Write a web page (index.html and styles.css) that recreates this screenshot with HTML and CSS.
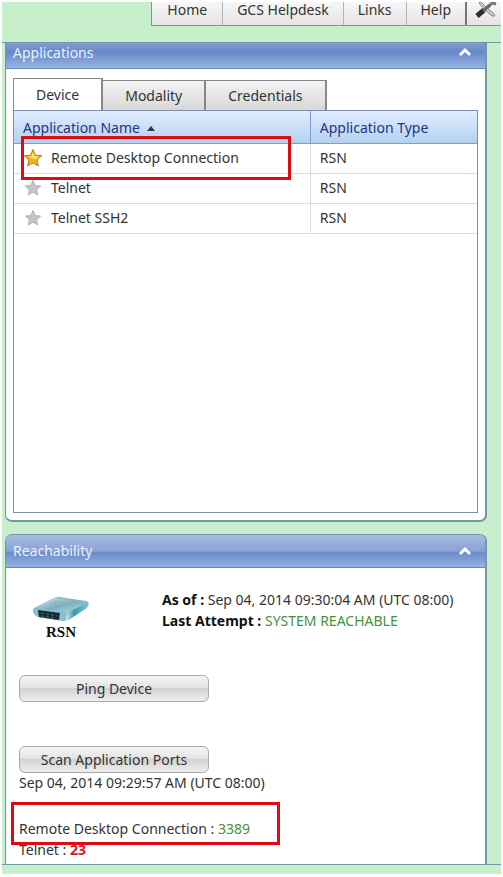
FILE: index.html
```html
<!DOCTYPE html>
<html lang="en">
<head>
	<meta charset="UTF-8">
	<title>Applications</title>
	<link rel="stylesheet" href="styles.css">
</head>
<body>
	<div class="page">
		<div class="topbar">
			<ul class="menu">
				<li><a href="#">Home</a></li>
				<li><a href="#">GCS Helpdesk</a></li>
				<li><a href="#">Links</a></li>
				<li><a href="#">Help</a></li>
				<li class="tools">
					<button type="button" class="tool-btn" aria-label="Tools">
						<svg width="22" height="16" viewBox="0 0 22 16">
							<path d="M6 0L10 4L18 11L20 14L17 14L8 6L4 1Z" fill="#ccc" stroke="#888" />
							<path d="M12 6L17 1L21 2" fill="none" stroke="#777" stroke-width="3" />
							<path d="M2 14L9 8" fill="none" stroke="#2c2c2c" stroke-width="5" />
							<path d="M8 9L15 3" fill="none" stroke="#666" stroke-width="3" />
						</svg>
					</button>
				</li>
			</ul>
		</div>

		<div class="content">
			<!-- applications -->
			<div class="panel panel-apps">
				<div class="panel-head">
					<h2>Applications</h2>
					<button type="button" class="toggle" aria-label="Collapse">
						<svg width="14" height="10" viewBox="0 0 14 10"><path d="M2 8L7 3L12 8" /></svg>
					</button>
				</div>
				<div class="panel-body">
					<div class="tabs">
						<button type="button" class="tab active">Device</button>
						<button type="button" class="tab">Modality</button>
						<button type="button" class="tab">Credentials</button>
					</div>
					<div class="grid">
						<table>
							<thead>
								<tr>
									<th class="col-name">Application Name <svg class="sort" width="8" height="5" viewBox="0 0 8 5"><path d="M0 5L4 0L8 5Z" /></svg></th>
									<th>Application Type</th>
								</tr>
							</thead>
							<tbody>
								<tr>
									<td class="marked">
										<svg class="star on" width="20" height="20" viewBox="0 0 20 20"><path d="M10 1.500L12.500 7.200L18.700 7.800L14 12L15.400 18L10 14.900L4.600 18L6 12L1.300 7.800L7.500 7.200Z" /><path class="shine" d="M10 4L11.700 8.300L16 8.800L12.500 11.200L4.500 9L8.300 8.300Z" /></svg>
										Remote Desktop Connection
										<span class="mark mark-row"></span>
									</td>
									<td>RSN</td>
								</tr>
								<tr>
									<td>
										<svg class="star" width="20" height="20" viewBox="0 0 20 20"><path d="M10 2.500L12.200 7.600L17.700 8.100L13.600 11.800L14.800 17L10 14.200L5.200 17L6.400 11.800L2.300 8.100L7.800 7.600Z" /></svg>
										Telnet
									</td>
									<td>RSN</td>
								</tr>
								<tr>
									<td>
										<svg class="star" width="20" height="20" viewBox="0 0 20 20"><path d="M10 2.500L12.200 7.600L17.700 8.100L13.600 11.800L14.800 17L10 14.200L5.200 17L6.400 11.800L2.300 8.100L7.800 7.600Z" /></svg>
										Telnet SSH2
									</td>
									<td>RSN</td>
								</tr>
							</tbody>
						</table>
					</div>
				</div>
			</div>

			<!-- reachability -->
			<div class="panel panel-reach">
				<div class="panel-head">
					<h2>Reachability</h2>
					<button type="button" class="toggle" aria-label="Collapse">
						<svg width="14" height="10" viewBox="0 0 14 10"><path d="M2 8L7 3L12 8" /></svg>
					</button>
				</div>
				<div class="panel-body">
					<div class="status">
						<div class="device">
							<svg width="58" height="28" viewBox="0 0 58 28">
								<defs>
									<linearGradient id="top" x1="0" y1="0" x2="1" y2="1">
										<stop offset="0" stop-color="#d8edf3" />
										<stop offset="0.500" stop-color="#7eafbd" />
										<stop offset="1" stop-color="#b5e1ec" />
									</linearGradient>
									<linearGradient id="side" x1="0" y1="0" x2="1" y2="0">
										<stop offset="0" stop-color="#e0f4f9" />
										<stop offset="0.400" stop-color="#3f93ac" />
										<stop offset="1" stop-color="#86c6d6" />
									</linearGradient>
								</defs>
								<path d="M1 13L22 2Q24 1 27 1L54 5Q58 6 56 10L38 23Q35 25 31 25L6 21Q1 19 1 13Z" fill="#79b5c6" />
								<path d="M2 12L22 2L56 6L35 17Z" fill="url(#top)" />
								<path d="M35 17L56 7L55 12L38 23L33 25Z" fill="url(#side)" />
								<path d="M2 12L35 17L33 25L6 21Q2 19 2 12Z" fill="#8fbfcd" />
								<path d="M6 14L28 17L27 24L7 21Z" fill="#152a33" />
								<path d="M9 17L25 20M9 20L24 22" fill="none" stroke="#50676f" stroke-dasharray="3 2" />
								<path d="M18 7L42 10M22 5L46 8" fill="none" stroke="#86b4c0" />
							</svg>
							<span>RSN</span>
						</div>
						<div class="info">
							<p><b>As of :</b> Sep 04, 2014 09:30:04 AM (UTC 08:00)</p>
							<p><b>Last Attempt :</b> <span class="ok">SYSTEM REACHABLE</span></p>
						</div>
					</div>
					<button type="button" class="btn btn-ping">Ping Device</button>
					<button type="button" class="btn">Scan Application Ports</button>
					<p class="scan-time">Sep 04, 2014 09:29:57 AM (UTC 08:00)</p>
					<div class="ports">
						<p class="port marked">Remote Desktop Connection : <span class="ok">3389</span><span class="mark mark-port"></span></p>
						<p class="port">Telnet : <b class="fail">23</b></p>
					</div>
				</div>
			</div>
		</div>
	</div>
</body>
</html>
```
FILE: styles.css
```css
* {
	box-sizing: border-box;
}
body,
h2,
p,
ul {
	margin: 0;
	padding: 0;
}
body {
	background: #fff;
	color: #333;
	font: 14px/20px "Noto Sans", "Open Sans", sans-serif;
}
li {
	list-style: none;
}
svg {
	display: block;
}
button {
	margin: 0;
	padding: 0;
	border: none;
	background: none;
	color: inherit;
	font: inherit;
}
.page {
	margin: 2px;
	padding-bottom: 9px;
	background: #c8efcb;
}

/* top menu */
.topbar {
	display: flex;
	justify-content: flex-end;
	height: 40px;
}
.menu {
	display: flex;
	height: 24px;
	border: 1px solid #8b918b;
	border-width: 0 0 1px 1px;
	background: linear-gradient(#f7f7f7, #e4e4e4);
}
.menu li {
	padding: 0 14px;
	border-left: 1px solid #b5b5b5;
	line-height: 16px;
}
.menu li:first-child {
	padding: 0 15px;
	border-left: none;
}
.menu a {
	color: #333;
	text-decoration: none;
}
.menu .tools {
	padding: 0 4px 0 8px;
	border-left: 2px solid #777;
}
.tool-btn {
	display: block;
}

/* panels */
.content {
	padding: 0 14px 0 3px;
	border: 1px solid #7199a5;
	border-width: 1px 0;
}
.panel {
	border: 1px solid #7199a5;
	border-width: 0 2px 2px 1px;
	background: #fff;
}
.panel-apps {
	margin-bottom: 12px;
	border-radius: 0 0 7px 7px;
}
.panel-reach {
	border-width: 1px 2px 0 1px;
	border-radius: 7px 7px 0 0;
}
.panel-head {
	display: flex;
	align-items: center;
	justify-content: space-between;
	height: 33px;
	padding: 0 13px 0 7px;
	border-bottom: 1px solid #6587bd;
	border-radius: 5px 5px 0 0;
	background: linear-gradient(#a5b9e2, #8ba3d3 50%, #6b8aca 55%, #97b3e0);
}
.panel-apps .panel-head {
	align-items: flex-start;
	height: 26px;
	border-radius: 0;
	background: linear-gradient(#829fd2, #6788ca 35%, #97b3e0);
}
.panel-head h2 {
	color: #e8f2ff;
	font-size: 14px;
	font-weight: normal;
	line-height: 20px;
}
.toggle path {
	fill: none;
	stroke: #fff;
	stroke-width: 3;
}
.panel-apps .toggle {
	margin-top: 4px;
}

/* tabs */
.panel-apps .panel-body {
	padding: 9px 7px 7px;
}
.tabs {
	display: flex;
	align-items: flex-end;
}
.tab {
	height: 30px;
	padding: 0 22px;
	border: 1px solid #888;
	border-width: 1px 2px 0 0;
	background: linear-gradient(#f3f3f3, #d8d8d8);
}
.tab.active {
	height: 32px;
	border-left-width: 1px;
	background: #fff;
}

/* application list */
.grid {
	min-height: 403px;
	border: 1px solid #7f8fa8;
}
.grid table {
	width: 100%;
	border-collapse: collapse;
	table-layout: fixed;
}
.grid th,
.grid td {
	height: 30px;
	padding: 0 9px;
	border-bottom: 1px solid #d9dde2;
	text-align: left;
}
.grid th {
	height: 32px;
	padding-top: 2px;
	border-bottom: 1px solid #7e9ccc;
	background: linear-gradient(#e0eeff, #b4d0f0);
	color: #1f3484;
	font-weight: normal;
}
.grid th + th,
.grid td + td {
	border-left: 1px solid #d9dde2;
}
.grid th + th {
	border-left-color: #7e9ccc;
}
.grid .col-name {
	width: 64%;
}
.sort {
	display: inline-block;
	margin-left: 3px;
	vertical-align: 2px;
	fill: #24395c;
}
.star {
	float: left;
	margin-right: 8px;
	fill: #c4c4c4;
	stroke: #b4b4b4;
}
.star.on {
	fill: #f2b11c;
	stroke: #bd7d16;
}
.star .shine {
	fill: #ffe568;
	stroke: none;
}

/* red frames */
.marked {
	position: relative;
}
.mark {
	position: absolute;
	border: 3px solid #dd0b14;
}
.mark-row {
	top: -8px;
	right: 19px;
	bottom: -7px;
	left: 7px;
}
.mark-port {
	top: -16px;
	bottom: -6px;
	left: -8px;
	width: 269px;
}

/* reachability */
.panel-reach .panel-body {
	padding: 21px 13px 4px;
}
.status {
	display: flex;
	align-items: flex-start;
	min-height: 84px;
	margin-bottom: 2px;
}
.device {
	display: flex;
	flex-direction: column;
	align-items: center;
	width: 60px;
	margin: 7px 71px 0 12px;
	color: #111;
	font: bold 15px/16px "Liberation Serif", serif;
}
.info {
	line-height: 21px;
	white-space: nowrap;
}
.info b {
	color: #111;
}
.ok {
	color: #46923a;
}
.fail {
	color: #e2101c;
}
.btn {
	display: block;
	width: 190px;
	height: 27px;
	border: 1px solid #aaa;
	border-radius: 6px;
	background: linear-gradient(#f6f6f6, #e4e4e4 45%, #d2d2d2 50%, #eee);
}
.btn-ping {
	margin-bottom: 44px;
}
.scan-time {
	margin-bottom: 25px;
}
.port {
	line-height: 21px;
}
```
